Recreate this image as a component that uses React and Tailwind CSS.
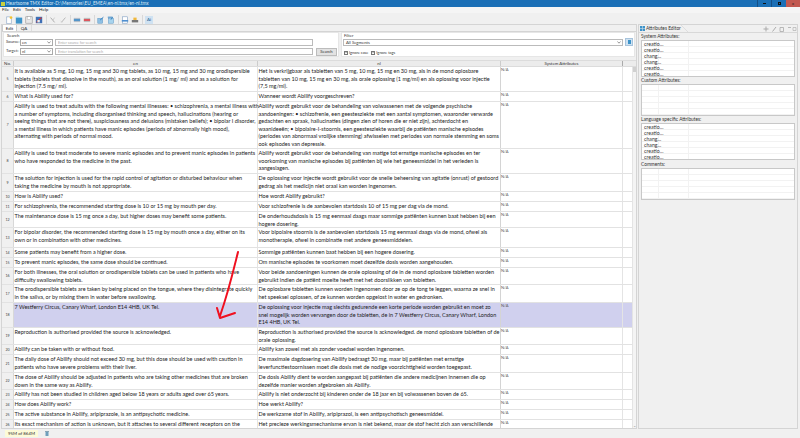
import React from 'react';

const FONT = { fontFamily: 'Lato, "Open Sans", sans-serif' };

const rows = [
  { no: 5, en: ['It is available as 5 mg, 10 mg, 15 mg and 30 mg tablets, as 10 mg, 15 mg and 30 mg orodispersible', 'tablets (tablets that dissolve in the mouth), as an oral solution (1 mg/ ml) and as a solution for', 'injection (7.5 mg/ ml).'], nl: ['Het is verkrijgbaar als tabletten van 5 mg, 10 mg, 15 mg en 30 mg, als in de mond oplosbare', 'tabletten van 10 mg, 15 mg en 30 mg, als orale oplossing (1 mg/ml) en als oplossing voor injectie', '(7,5 mg/ml).'] },
  { no: 6, en: ['What is Abilify used for?'], nl: ['Wanneer wordt Abilify voorgeschreven?'] },
  { no: 7, en: ['Abilify is used to treat adults with the following mental illnesses: • schizophrenia, a mental illness with', 'a number of symptoms, including disorganised thinking and speech, hallucinations (hearing or', 'seeing things that are not there), suspiciousness and delusions (mistaken beliefs); • bipolar I disorder,', 'a mental illness in which patients have manic episodes (periods of abnormally high mood),', 'alternating with periods of normal mood.'], nl: ['Abilify wordt gebruikt voor de behandeling van volwassenen met de volgende psychische', 'aandoeningen: • schizofrenie, een geestesziekte met een aantal symptomen, waaronder verwarde', 'gedachten en spraak, hallucinaties (dingen zien of horen die er niet zijn), achterdocht en', 'waanideeën; • bipolaire-I-stoornis, een geestesziekte waarbij de patiënten manische episodes', '(periodes van abnormaal vrolijke stemming) afwisselen met periodes van normale stemming en soms', 'ook episodes van depressie.'] },
  { no: 8, en: ['Abilify is used to treat moderate to severe manic episodes and to prevent manic episodes in patients', 'who have responded to the medicine in the past.'], nl: ['Abilify wordt gebruikt voor de behandeling van matige tot ernstige manische episodes en ter', 'voorkoming van manische episodes bij patiënten bij wie het geneesmiddel in het verleden is', 'aangeslagen.'] },
  { no: 9, en: ['The solution for injection is used for the rapid control of agitation or disturbed behaviour when', 'taking the medicine by mouth is not appropriate.'], nl: ['De oplossing voor injectie wordt gebruikt voor de snelle beheersing van agitatie (onrust) of gestoord', 'gedrag als het medicijn niet oraal kan worden ingenomen.'] },
  { no: 10, en: ['How is Abilify used?'], nl: ['Hoe wordt Abilify gebruikt?'] },
  { no: 11, en: ['For schizophrenia, the recommended starting dose is 10 or 15 mg by mouth per day.'], nl: ['Voor schizofrenie is de aanbevolen startdosis 10 of 15 mg per dag via de mond.'] },
  { no: 12, en: ['The maintenance dose is 15 mg once a day, but higher doses may benefit some patients.'], nl: ['De onderhoudsdosis is 15 mg eenmaal daags maar sommige patiënten kunnen baat hebben bij een', 'hogere dosering.'] },
  { no: 13, en: ['For bipolar disorder, the recommended starting dose is 15 mg by mouth once a day, either on its', 'own or in combination with other medicines.'], nl: ['Voor bipolaire stoornis is de aanbevolen startdosis 15 mg eenmaal daags via de mond, ofwel als', 'monotherapie, ofwel in combinatie met andere geneesmiddelen.'] },
  { no: 14, en: ['Some patients may benefit from a higher dose.'], nl: ['Sommige patiënten kunnen baat hebben bij een hogere dosering.'] },
  { no: 15, en: ['To prevent manic episodes, the same dose should be continued.'], nl: ['Om manische episodes te voorkomen moet dezelfde dosis worden aangehouden.'] },
  { no: 16, en: ['For both illnesses, the oral solution or orodispersible tablets can be used in patients who have', 'difficulty swallowing tablets.'], nl: ['Voor beide aandoeningen kunnen de orale oplossing of de in de mond oplosbare tabletten worden', 'gebruikt indien de patiënt moeite heeft met het doorslikken van tabletten.'] },
  { no: 17, en: ['The orodispersible tablets are taken by being placed on the tongue, where they disintegrate quickly', 'in the saliva, or by mixing them in water before swallowing.'], nl: ['De oplosbare tabletten kunnen worden ingenomen door ze op de tong te leggen, waarna ze snel in', 'het speeksel oplossen, of ze kunnen worden opgelost in water en gedronken.'] },
  { no: 18, active: true, en: ['7 Westferry Circus, Canary Wharf, London E14 4HB, UK Tel.'], nl: ['De oplossing voor injectie mag slechts gedurende een korte periode worden gebruikt en moet zo', 'snel mogelijk worden vervangen door de tabletten, de in 7 Westferry Circus, Canary Wharf, London', 'E14 4HB, UK Tel.'] },
  { no: 19, en: ['Reproduction is authorised provided the source is acknowledged.'], nl: ['Reproduction is authorised provided the source is acknowledged. de mond oplosbare tabletten of de', 'orale oplossing.'] },
  { no: 20, en: ['Abilify can be taken with or without food.'], nl: ['Abilify kan zowel met als zonder voedsel worden ingenomen.'] },
  { no: 21, en: ['The daily dose of Abilify should not exceed 30 mg, but this dose should be used with caution in', 'patients who have severe problems with their liver.'], nl: ['De maximale dagdosering van Abilify bedraagt 30 mg, maar bij patiënten met ernstige', 'leverfunctiestoornissen moet die dosis met de nodige voorzichtigheid worden toegepast.'] },
  { no: 22, en: ['The dose of Abilify should be adjusted in patients who are taking other medicines that are broken', 'down in the same way as Abilify.'], nl: ['De dosis Abilify dient te worden aangepast bij patiënten die andere medicijnen innemen die op', 'dezelfde manier worden afgebroken als Abilify.'] },
  { no: 23, en: ['Abilify has not been studied in children aged below 18 years or adults aged over 65 years.'], nl: ['Abilify is niet onderzocht bij kinderen onder de 18 jaar en bij volwassenen boven de 65.'] },
  { no: 24, en: ['How does Abilify work?'], nl: ['Hoe werkt Abilify?'] },
  { no: 25, en: ['The active substance in Abilify, aripiprazole, is an antipsychotic medicine.'], nl: ['De werkzame stof in Abilify, aripiprazol, is een antipsychotisch geneesmiddel.'] },
  { no: 26, en: ['Its exact mechanism of action is unknown, but it attaches to several different receptors on the'], nl: ['Het precieze werkingsmechanisme ervan is niet bekend, maar de stof hecht zich aan verschillende'] },
];

const rowHeights = {
  5: 'h-[25px]', 6: 'h-[10px]', 7: 'h-[47px]', 8: 'h-[25px]', 9: 'h-[18px]', 10: 'h-[10px]', 11: 'h-[10px]', 12: 'h-[16px]',
  13: 'h-[20px]', 14: 'h-[10px]', 15: 'h-[10px]', 16: 'h-[17px]', 17: 'h-[18px]', 18: 'h-[25px]', 19: 'h-[17px]', 20: 'h-[10px]',
  21: 'h-[18px]', 22: 'h-[17px]', 23: 'h-[10px]', 24: 'h-[10px]', 25: 'h-[10px]', 26: 'h-[10px]',
};

function Lines({ lines }) {
  return (
    <div className="pl-[0.5px] pt-[1px] text-[5.5px] leading-[7.5px] text-[#1c1c1c] whitespace-nowrap">
      {lines.map((l, i) => <div key={i}>{l}</div>)}
    </div>
  );
}

function Row({ row }) {
  return (
    <div className={`flex shrink-0 border-b border-[#e2e2e2] overflow-hidden ${rowHeights[row.no]} ${row.active ? 'bg-[#d0d0ee]' : 'bg-white'}`}>
      <div className="w-[12px] shrink-0 bg-[#f0f0f0] border-r border-[#d8d8d8] flex items-center justify-center text-[3.6px] text-[#444]">{row.no}</div>
      <div className="w-[244px] shrink-0 border-r border-[#e4e4e4]"><Lines lines={row.en} /></div>
      <div className="w-[243px] shrink-0 border-r border-[#d4d4d4]"><Lines lines={row.nl} /></div>
      <div className="w-[122px] shrink-0 border-r border-[#e4e4e4] text-[4px] leading-[6px] text-[#555]">N/A</div>
      <div className="flex-1" />
    </div>
  );
}

function ToolIcon({ children }) {
  return <svg width="8" height="8" viewBox="0 0 10 10" className="shrink-0">{children}</svg>;
}

function Sep() {
  return <div className="w-[1px] h-[9px] bg-[#d8d8d8] mx-[0.5px] shrink-0" />;
}

function Chevron() {
  return (
    <svg width="4" height="3" viewBox="0 0 4 3" className="ml-auto mr-[1px] shrink-0">
      <path d="M.5.5 2 2.200 3.500.5" fill="none" stroke="#555" strokeWidth=".6" />
    </svg>
  );
}

function Check() {
  return (
    <span className="w-[4px] h-[4px] border-[0.5px] border-[#777] bg-white flex items-center justify-center shrink-0">
      <svg width="3" height="3" viewBox="0 0 3 3"><path d="M.4 1.500 1.200 2.400 2.700.4" fill="none" stroke="#222" strokeWidth=".6" /></svg>
    </span>
  );
}

function Toolbar() {
  return (
    <div className="h-[11px] shrink-0 bg-[#f0f0f0] flex items-center pl-[5px] gap-[2px] pt-[2px]">
      <ToolIcon><path d="M2 1h4l2 2v6.500H2z" fill="#fff" stroke="#7a9bc0" strokeWidth=".7" /><circle cx="7.500" cy="2" r="1.700" fill="#f2c230" /></ToolIcon>
      <ToolIcon><rect x="1" y="2" width="8" height="7.500" fill="#3d93c9" /><path d="M1 .8h4l1 1.500H1z" fill="#8ccbe8" /></ToolIcon>
      <ToolIcon><rect x="1" y="1" width="8" height="8" fill="#e8e8e8" stroke="#8a8a8a" strokeWidth=".7" /><rect x="3" y="1" width="4" height="3" fill="#fff" stroke="#999" strokeWidth=".4" /></ToolIcon>
      <ToolIcon><rect x="1" y="1" width="8" height="8" fill="#3e6fb5" /><path d="M2 8 8 2" stroke="#d8342c" strokeWidth="1.400" /><rect x="3" y="5" width="3" height="3" fill="#eee" /></ToolIcon>
      <Sep />
      <ToolIcon><path d="M2 2 7 8" stroke="#aaa" strokeWidth="1.200" /><path d="M7 2 5 5" stroke="#c4c4c4" strokeWidth="1" /></ToolIcon>
      <ToolIcon><path d="M3 8 8 2" stroke="#b4b4b4" strokeWidth="1.200" /><path d="M2 6 4 8" stroke="#ccc" strokeWidth="1" /></ToolIcon>
      <Sep />
      <ToolIcon><path d="M1 3h8M1 7h8" stroke="#9ab" strokeWidth="1" /><rect x="1" y="4" width="8" height="2" fill="#2f7fc0" /></ToolIcon>
      <ToolIcon><path d="M1 3h8M1 7h8" stroke="#aaa" strokeWidth="1" /><rect x="1" y="4" width="8" height="2" fill="#d8343c" /></ToolIcon>
      <Sep />
      <ToolIcon><rect x="1" y="3" width="6" height="6" fill="#8fc0e4" stroke="#4f8fc0" strokeWidth=".6" /><path d="M4 5 8 1.500" stroke="#2f7fc0" strokeWidth="1.200" /></ToolIcon>
      <ToolIcon><rect x="2" y="3" width="6" height="6" fill="#a8d4ee" stroke="#4f8fc0" strokeWidth=".6" /><path d="M1 1.500h6l-2 3" fill="none" stroke="#2f7fc0" strokeWidth="1.200" /></ToolIcon>
      <Sep />
      <ToolIcon><rect x="2" y="1" width="6" height="8" fill="#fff" stroke="#7a9bc0" strokeWidth=".7" /><rect x="1" y="5" width="8" height="2" fill="#4f8fd0" /></ToolIcon>
      <ToolIcon><path d="M1 5h8v3H1z" fill="#777" /><path d="M3 2h4v3H3z" fill="#f0b83c" /></ToolIcon>
      <Sep />
      <div className="w-[8px] h-[8px] bg-[#cfe2f2] text-[4.5px] leading-[8px] text-center text-[#2a5c90] shrink-0">Ai</div>
    </div>
  );
}

function SearchForm() {
  return (
    <div className="flex gap-[2px] h-[28px] shrink-0 pl-[1px] pr-[1px] bg-[#f0f0f0]">
      <div className="w-[336px] h-[25px] bg-white border border-[#e6e6e6] relative pl-[2px] pt-[6px] flex flex-col gap-[2px]">
        <span className="absolute top-[-0.5px] left-[3px] text-[4.2px] leading-[5px] text-[#333]">Search</span>
        <div className="flex items-center h-[7px]">
          <span className="w-[14px] text-[4.2px] text-[#333]">Source:</span>
          <div className="w-[33px] h-[7px] border border-[#aaa] text-[4.2px] leading-[5px] pl-[1px] text-[#333] flex items-center">en<Chevron /></div>
          <input readOnly placeholder="Enter source for search" className="ml-[2px] w-[258px] h-[7px] border border-[#bbb] text-[3.8px] pl-[2px] outline-none placeholder:text-[#aaa]" />
        </div>
        <div className="flex items-center h-[7px]">
          <span className="w-[14px] text-[4.2px] text-[#333]">Target:</span>
          <div className="w-[33px] h-[7px] border border-[#aaa] text-[4.2px] leading-[5px] pl-[1px] text-[#333] flex items-center">nl<Chevron /></div>
          <input readOnly placeholder="Enter translation for search" className="ml-[2px] w-[258px] h-[7px] border border-[#bbb] text-[3.8px] pl-[2px] outline-none placeholder:text-[#aaa]" />
          <div className="ml-[3px] w-[21px] h-[8px] bg-[#e2e2e2] border border-[#bcbcbc] text-[4.2px] leading-[6px] text-center text-[#333]">Search</div>
        </div>
      </div>
      <div className="flex-1 h-[25px] bg-white border border-[#e6e6e6] relative pl-[1px] pr-[1px] pt-[5px]">
        <span className="absolute top-[-0.5px] left-[2px] text-[4.2px] leading-[5px] text-[#333]">Filter</span>
        <div className="flex items-center gap-[2px]">
          <div className="flex-1 h-[7px] border border-[#bbb] text-[4.2px] leading-[5px] pl-[2px] text-[#333] flex items-center">All Segments<Chevron /></div>
          <div className="w-[8px] h-[8px] bg-[#cfe2f2] border border-[#a8c4dc] flex items-center justify-center">
            <div className="w-[3px] h-[4px] bg-[#3d93c9]" />
          </div>
        </div>
        <div className="flex items-center gap-[3px] mt-[4px] ml-[1px] text-[3.9px] text-[#333]">
          <span className="flex items-center gap-[1px]"><Check />Ignore case</span>
          <span className="flex items-center gap-[1px]"><Check />Ignore tags</span>
        </div>
      </div>
    </div>
  );
}

function AttrBox({ items, h }) {
  return (
    <div className={`mx-[2px] border border-[#c8c8c8] bg-white ${h} overflow-hidden shrink-0`}>
      {items.map((t, i) => (
        <div key={i} className="h-[6px] border-b border-[#f2f2f2] flex">
          <div className="w-[17px] border-r border-[#f2f2f2] pl-[2px] text-[5.2px] leading-[6px] text-[#333]">{t}</div>
          <div className="w-[30px] border-r border-[#f2f2f2]" />
        </div>
      ))}
    </div>
  );
}

function AttrPanel() {
  const filled = ['creatio...', 'creatio...', 'chang...', 'chang...', 'creatio...', 'creatio...'];
  const empty = ['', '', '', '', ''];
  const label = 'px-[2px] text-[4.8px] text-[#333] shrink-0';
  return (
    <div className="w-[160px] h-[405px] ml-[1px] mr-[2px] bg-[#f0f0f0] border border-[#d4d4d4] flex flex-col">
      <div className="h-[8px] shrink-0 flex items-center border-b border-[#d8d8d8] text-[4.8px] text-[#333] pl-[1px]">
        <svg width="5" height="5" viewBox="0 0 5 5" className="shrink-0 mr-[1px]"><rect width="2.300" height="2.300" fill="#3d93c9" /><rect x="2.700" width="2.300" height="2.300" fill="#3d93c9" /><rect y="2.700" width="2.300" height="2.300" fill="#3d93c9" /><rect x="2.700" y="2.700" width="2.300" height="2.300" fill="#3d93c9" /></svg>
        <span>Attributes Editor</span>
        <svg width="8" height="8" viewBox="0 0 8 8" className="shrink-0"><path d="M0 0 7 7" stroke="#ccc" strokeWidth=".5" /></svg>
        <svg width="34" height="6" viewBox="0 0 34 6" className="ml-auto shrink-0">
          <path d="M3 .5v5M.5 3h5" stroke="#aaa" strokeWidth="1" />
          <path d="M9.500 5.500 13 1" stroke="#aaa" strokeWidth="1" />
          <path d="M17 1.500h3.500v4H17z" fill="none" stroke="#aaa" strokeWidth=".8" />
          <path d="M25 1.500h3" stroke="#aaa" strokeWidth=".8" />
          <path d="M30 1.500h3v3h-3z" fill="none" stroke="#aaa" strokeWidth=".6" />
        </svg>
      </div>
      <div className={`${label} leading-[7px]`}>System Attributes:</div>
      <AttrBox items={filled} h="h-[37px]" />
      <div className={`${label} leading-[7px]`}>Custom Attributes:</div>
      <AttrBox items={empty} h="h-[32px]" />
      <div className={`${label} leading-[7px]`}>Language specific Attributes:</div>
      <AttrBox items={filled} h="h-[37px]" />
      <div className={`${label} leading-[8px]`}>Comments:</div>
      <AttrBox items={empty} h="h-[32px]" />
    </div>
  );
}

export default function App() {
  return (
    <div className="relative w-[800px] h-[438px] overflow-hidden bg-[#f0f0f0] flex flex-col" style={FONT}>
      <div className="h-[7px] bg-[#1a6fb6] flex items-center pl-[1px] gap-[1px] shrink-0">
        <div className="w-[4px] h-[4px] bg-[#c8d040]" />
        <span className="text-[4.7px] leading-[7px] text-[#d8e8f4]">Heartsome TMX Editor-D:\Memories\EU_EMEA\en-nl.tmx/en-nl.tmx</span>
        <div className="ml-auto flex h-[7px]">
          <div className="w-[14px] border-l border-[#144f86] flex items-center justify-center"><span className="w-[3px] h-[1px] bg-[#111]" /></div>
          <div className="w-[15px] border-l border-[#144f86] flex items-center justify-center"><span className="w-[3px] h-[3px] border border-[#111]" /></div>
          <div className="w-[14px] bg-[#c25850] flex items-center justify-center text-[4px] text-[#222]">x</div>
        </div>
      </div>
      <div className="h-[6px] flex gap-[4px] pl-[2px] text-[4.5px] leading-[6px] text-[#222] bg-[#f5f5f5] shrink-0">
        <span>File</span><span>Edit</span><span>Tools</span><span>Help</span>
      </div>
      <Toolbar />
      <div className="flex-1 flex min-h-0">
        <div className="w-[636px] ml-[1px] flex flex-col border border-[#d4d4d4] h-[405px] bg-[#f0f0f0]">
          <div className="h-[7px] flex text-[4.4px] leading-[7px] text-[#222] shrink-0 border-b border-[#d4d4d4]">
            <span className="w-[15px] bg-white border-x border-[#ccc] text-center">Edit</span>
            <span className="w-[15px] text-center border-r border-[#ddd]">QA</span>
          </div>
          <SearchForm />
          <div className="h-[7px] flex bg-[#ececec] border-y border-[#dcdcdc] text-[4.4px] leading-[5px] text-[#333] shrink-0">
            <span className="w-[12px] text-center border-r border-[#ccc]">No.</span>
            <span className="w-[244px] text-center border-r border-[#ccc]">en</span>
            <span className="w-[243px] text-center border-r border-[#ccc]">nl</span>
            <span className="w-[122px] text-center border-r border-[#aaa]">System Attributes</span>
          </div>
          <div className="flex-1 flex min-h-0 overflow-hidden">
            <div className="flex-1 flex flex-col min-w-0 overflow-hidden bg-white">
              {rows.map((r) => <Row key={r.no} row={r} />)}
            </div>
            <div className="w-[4px] shrink-0 bg-[#f4f4f4] border-l border-[#e4e4e4] flex flex-col">
              <div className="h-[5px] bg-[#d0d0d0]" />
              <div className="mt-auto text-[3.500px] leading-[4px] text-center text-[#888]">⌄</div>
            </div>
          </div>
        </div>
        <AttrPanel />
      </div>
      <div className="h-[9px] flex items-center pl-[5px] gap-[7px] text-[4.4px] shrink-0 bg-[#f0f0f0]">
        <span className="w-[33px] bg-[#fdfbd8] text-center leading-[7px] text-[#333]">95M of 864M</span>
        <svg width="4" height="5" viewBox="0 0 4 5"><path d="M.5 1h3v4h-3z" fill="#6f9fbc" /><path d="M0 .5h4" stroke="#3f6f8c" strokeWidth=".6" /></svg>
      </div>
      <svg className="absolute left-0 top-0 pointer-events-none" width="800" height="438" viewBox="0 0 800 438">
        <path d="M238 252C234 268 229 290 220 316M217 308L220 318L235 313" fill="none" stroke="#f01020" strokeWidth="2" strokeLinecap="round" strokeLinejoin="round" />
      </svg>
    </div>
  );
}
